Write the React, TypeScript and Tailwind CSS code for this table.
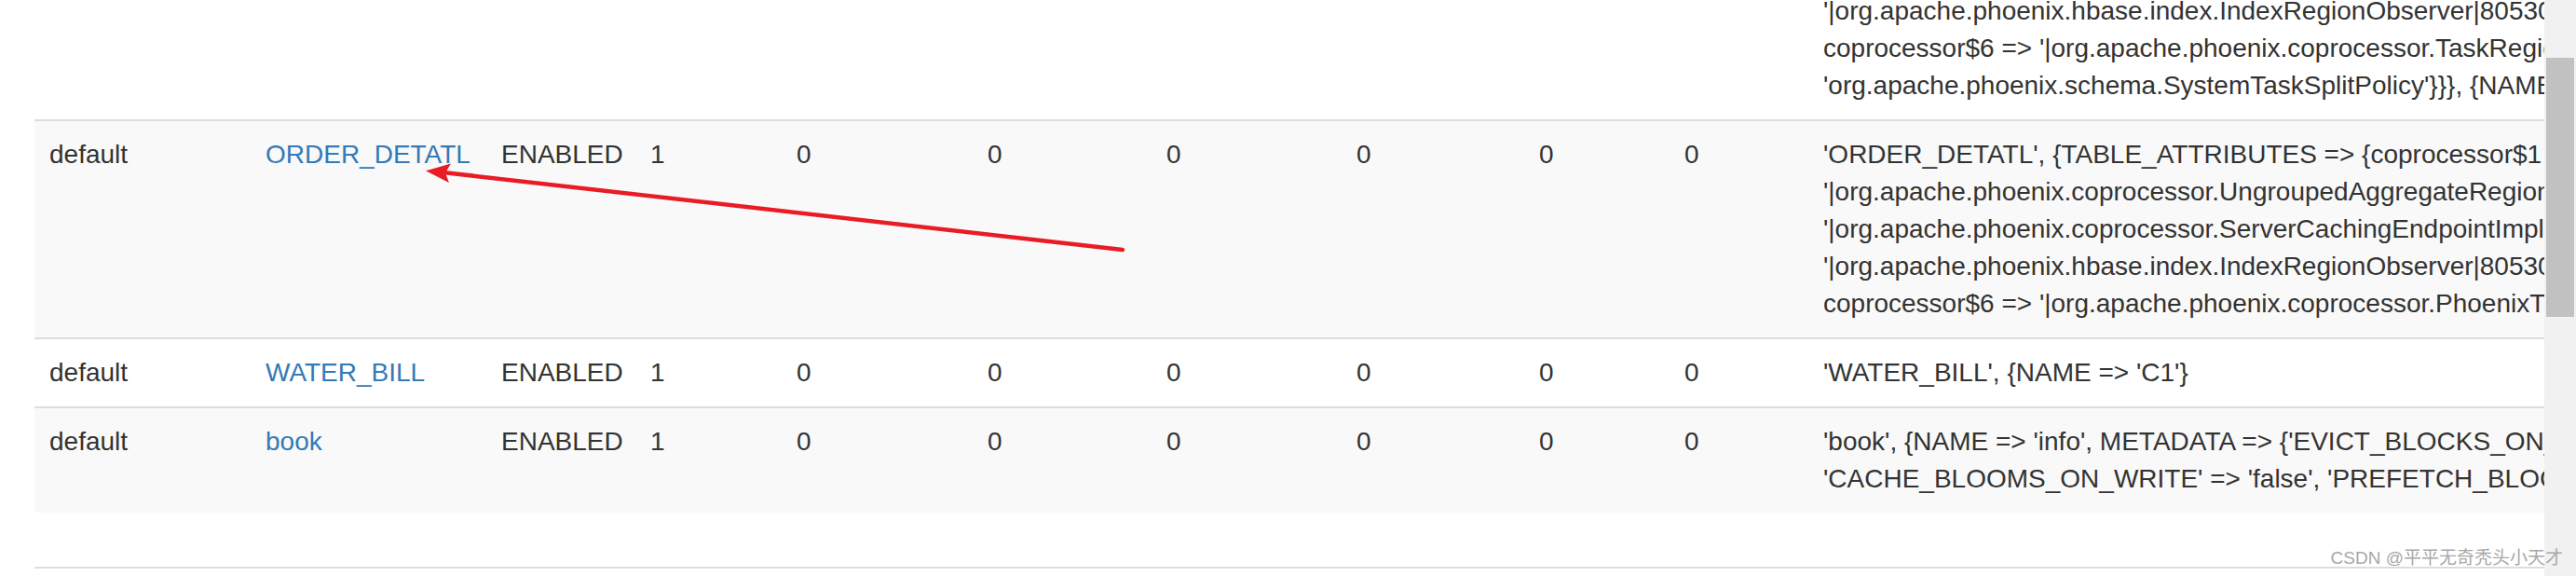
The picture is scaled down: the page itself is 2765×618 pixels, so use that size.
import React from 'react'

type Row = {
  ns: string
  name: string
  state: string
  regions: string
  counts: string[]
  desc: string[]
}

// first row is scrolled mostly out of view: only the tail of its description shows
const rows: Row[] = [
  {
    ns: '',
    name: '',
    state: '',
    regions: '',
    counts: ['', '', '', '', '', ''],
    desc: [
      "'|org.apache.phoenix.hbase.index.IndexRegionObserver|805306366|org.apache.hadoop.hbase.index.codec.class=org.apache.phoenix.index.PhoenixIndexCodec',",
      "coprocessor$6 => '|org.apache.phoenix.coprocessor.TaskRegionObserver|805306366|', METADATA => {'SPLIT_POLICY' =>",
      "'org.apache.phoenix.schema.SystemTaskSplitPolicy'}}}, {NAME => '0', VERSIONS => '3', KEEP_DELETED_CELLS => 'TRUE'}",
    ],
  },
  {
    ns: 'default',
    name: 'ORDER_DETATL',
    state: 'ENABLED',
    regions: '1',
    counts: ['0', '0', '0', '0', '0', '0'],
    desc: [
      "'ORDER_DETATL', {TABLE_ATTRIBUTES => {coprocessor$1 => '|org.apache.phoenix.coprocessor.ScanRegionObserver|805306366|', coprocessor$2 =>",
      "'|org.apache.phoenix.coprocessor.UngroupedAggregateRegionObserver|805306366|', coprocessor$3 =>",
      "'|org.apache.phoenix.coprocessor.ServerCachingEndpointImpl|805306366|', coprocessor$4 =>",
      "'|org.apache.phoenix.hbase.index.IndexRegionObserver|805306366|org.apache.hadoop.hbase.index.codec.class=org.apache.phoenix.index.PhoenixIndexCodec',",
      "coprocessor$6 => '|org.apache.phoenix.coprocessor.PhoenixTTLRegionObserver|805306364|'}}, {NAME => '0', DATA_BLOCK_ENCODING => 'FAST_DIFF'}",
    ],
  },
  {
    ns: 'default',
    name: 'WATER_BILL',
    state: 'ENABLED',
    regions: '1',
    counts: ['0', '0', '0', '0', '0', '0'],
    desc: ["'WATER_BILL', {NAME => 'C1'}"],
  },
  {
    ns: 'default',
    name: 'book',
    state: 'ENABLED',
    regions: '1',
    counts: ['0', '0', '0', '0', '0', '0'],
    desc: [
      "'book', {NAME => 'info', METADATA => {'EVICT_BLOCKS_ON_CLOSE' => 'false', 'NEW_VERSION_BEHAVIOR' => 'false', 'KEEP_DELETED_CELLS' => 'FALSE',",
      "'CACHE_BLOOMS_ON_WRITE' => 'false', 'PREFETCH_BLOCKS_ON_OPEN' => 'false', 'CACHE_DATA_ON_WRITE' => 'false'}}",
    ],
  },
]

const countWidths = ['w-[205px]', 'w-[192px]', 'w-[204px]', 'w-[196px]', 'w-[156px]', 'w-[149px]']

export default function App() {
  return (
    <div className="relative flex h-[618px] w-[2765px] overflow-hidden bg-white font-['Liberation_Sans',Arial,sans-serif] text-[28px] leading-[40px] text-[#333]">
      <main className="flex-1 overflow-hidden pl-[37px]">
        <table className="-mt-[26px] w-[3200px] table-fixed border-collapse">
          <tbody>
            {rows.map((row, i) => (
              <tr key={i} className={i % 2 === 1 ? 'bg-[#f9f9f9]' : 'bg-white'}>
                <td className="w-[232px] border-t-2 border-[#ddd] p-4 align-top">{row.ns}</td>
                <td className="w-[253px] border-t-2 border-[#ddd] p-4 align-top">
                  <a href="#" className="text-[#337ab7]">{row.name}</a>
                </td>
                <td className="w-[160px] border-t-2 border-[#ddd] p-4 align-top">{row.state}</td>
                <td className="w-[157px] border-t-2 border-[#ddd] p-4 align-top">{row.regions}</td>
                {row.counts.map((c, j) => (
                  <td key={j} className={`${countWidths[j]} border-t-2 border-[#ddd] p-4 align-top`}>{c}</td>
                ))}
                <td className="border-t-2 border-[#ddd] p-4 align-top">
                  {row.desc.map((line, k) => (
                    <div key={k} className="whitespace-nowrap">{line}</div>
                  ))}
                </td>
              </tr>
            ))}
          </tbody>
        </table>
        <div className="mt-[58px] border-t-2 border-[#ddd]" />
      </main>

      {/* page scrollbar */}
      <div className="w-[34px] shrink-0 bg-[#f1f1f1] pl-[2px] pt-[62px]">
        <div className="h-[278px] w-[30px] bg-[#c1c1c1]" />
      </div>

      {/* red annotation arrow */}
      <svg className="pointer-events-none absolute left-0 top-0" width="2765" height="618" viewBox="0 0 2765 618">
        <line x1="1205" y1="268" x2="476" y2="185" stroke="#e81c24" strokeWidth="4.5" strokeLinecap="round" />
        <polygon points="457,183.3 484,175.5 478,185.6 482,196" fill="#e81c24" />
      </svg>

      {/* watermark */}
      <div className="pointer-events-none absolute right-[14px] top-[586px] font-['Liberation_Sans','Noto_Sans_CJK_SC',sans-serif] text-[19px] leading-[26px] text-[#a8a8a8]">
        CSDN @平平无奇秃头小天才
      </div>
    </div>
  )
}
